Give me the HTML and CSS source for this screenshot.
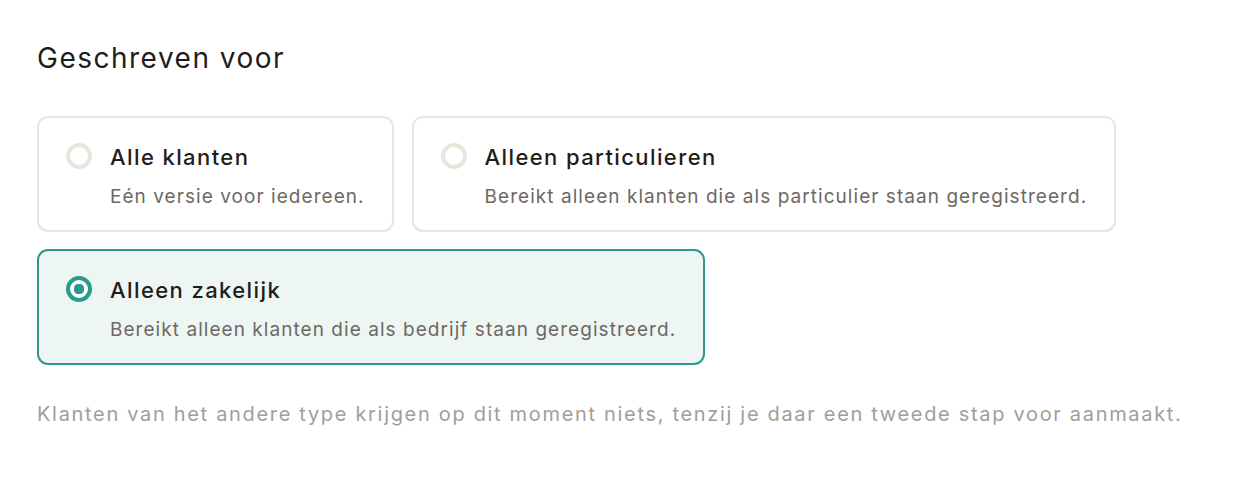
FILE: index.html
```html
<!DOCTYPE html>
<html lang="nl">
<head>
    <meta charset="utf-8">
    <title>Geschreven voor</title>
    <link rel="stylesheet" href="styles.css">
</head>
<body>

<div class="panel">
    <h2 class="title">Geschreven voor</h2>

    <div class="options">
        <label class="option">
            <span class="radio"></span>
            <span class="text">
                <span class="label">Alle klanten</span>
                <span class="desc">Eén versie voor iedereen.</span>
            </span>
        </label>

        <label class="option">
            <span class="radio"></span>
            <span class="text">
                <span class="label">Alleen particulieren</span>
                <span class="desc">Bereikt alleen klanten die als particulier staan geregistreerd.</span>
            </span>
        </label>

        <label class="option active">
            <span class="radio"></span>
            <span class="text">
                <span class="label">Alleen zakelijk</span>
                <span class="desc">Bereikt alleen klanten die als bedrijf staan geregistreerd.</span>
            </span>
        </label>
    </div>

    <p class="note">Klanten van het andere type krijgen op dit moment niets, tenzij je daar een tweede stap voor aanmaakt.</p>
</div>

</body>
</html>
```

FILE: styles.css
```css
html {
    height: 100%;
}
body {
    margin: 0;
    padding: 0;
    background: #ffffff;
    color: #1f1d1b;
    font-family: Inter, "Noto Sans", sans-serif;
}

.panel {
    padding: 38px 37px;
}

.title {
    margin: 0 0 38px 0;
    font-size: 28px;
    font-weight: 400;
    line-height: 40px;
    letter-spacing: 1.5px;
}

.options {
    display: flex;
    flex-wrap: wrap;
    gap: 17px 18px;
    max-width: 1100px;
}

.option {
    display: flex;
    align-items: flex-start;
    gap: 18px;
    padding: 25px 27px 20px 27px;
    border: 2px solid #e9e4dc;
    border-radius: 11px;
    background: #ffffff;
    cursor: pointer;
}

.option.active {
    border-color: #2b9a8a;
    background: #eef6f4;
}

.radio {
    flex: none;
    width: 18px;
    height: 18px;
    border: 4px solid #e9e4dc;
    border-radius: 50%;
    background: #ffffff;
}

.option.active .radio {
    border-color: #2b9a8a;
    background: radial-gradient(circle, #2b9a8a 0 5px, #ffffff 5.5px);
}

.text {
    display: flex;
    flex-direction: column;
    gap: 13px;
}

.label {
    font-size: 22px;
    line-height: 28px;
    font-weight: 500;
    letter-spacing: 1.4px;
    color: #1f1d1b;
}

.desc {
    font-size: 19px;
    line-height: 26px;
    letter-spacing: 1.05px;
    color: #6e6862;
}

.note {
    margin: 35px 0 0 0;
    font-size: 20px;
    line-height: 28px;
    letter-spacing: 1.68px;
    color: #a39d97;
}
```
